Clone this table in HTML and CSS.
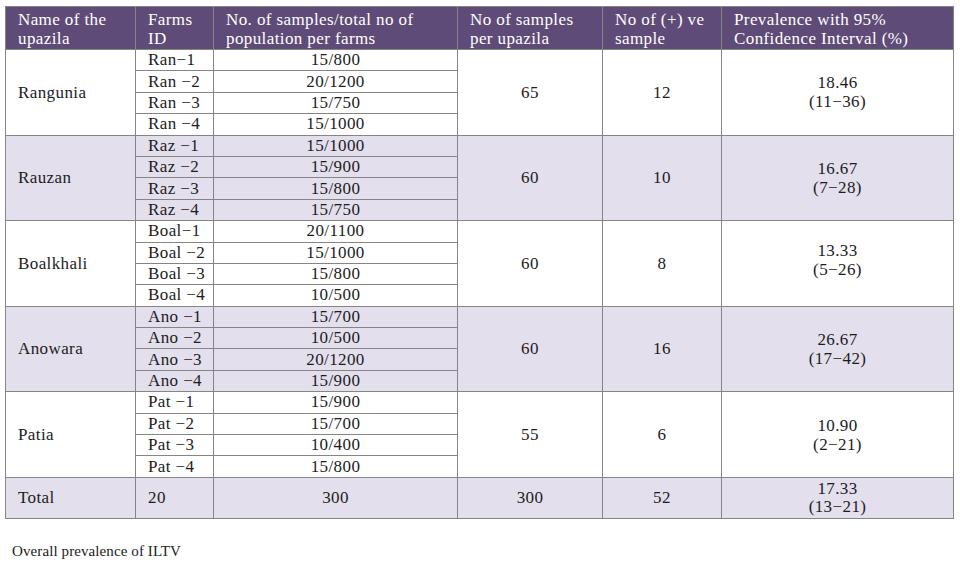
FILE: index.html
```html
<!DOCTYPE html>
<html>
<head>
<meta charset="utf-8">
<link rel="stylesheet" href="styles.css">
</head>
<body>
<div class="page">
<table class="data">
<colgroup>
<col class="c1"><col class="c2"><col class="c3"><col class="c4"><col class="c5"><col class="c6">
</colgroup>
<thead>
<tr>
<th>Name of the<br>upazila</th>
<th>Farms<br>ID</th>
<th>No. of samples/total no of<br>population per farms</th>
<th>No of samples<br>per upazila</th>
<th>No of (+) ve<br>sample</th>
<th>Prevalence with 95%<br>Confidence Interval (%)</th>
</tr>
</thead>
<tbody>
<tr class="sub"><td rowspan="4" class="name">Rangunia</td><td class="id">Ran−1</td><td class="ctr">15/800</td><td rowspan="4" class="ctr">65</td><td rowspan="4" class="ctr">12</td><td rowspan="4" class="ctr">18.46<br>(11−36)</td></tr>
<tr class="sub"><td class="id">Ran −2</td><td class="ctr">20/1200</td></tr>
<tr class="sub"><td class="id">Ran −3</td><td class="ctr">15/750</td></tr>
<tr class="sub"><td class="id">Ran −4</td><td class="ctr">15/1000</td></tr>
</tbody>
<tbody class="alt">
<tr class="sub"><td rowspan="4" class="name">Rauzan</td><td class="id">Raz −1</td><td class="ctr">15/1000</td><td rowspan="4" class="ctr">60</td><td rowspan="4" class="ctr">10</td><td rowspan="4" class="ctr">16.67<br>(7−28)</td></tr>
<tr class="sub"><td class="id">Raz −2</td><td class="ctr">15/900</td></tr>
<tr class="sub"><td class="id">Raz −3</td><td class="ctr">15/800</td></tr>
<tr class="sub"><td class="id">Raz −4</td><td class="ctr">15/750</td></tr>
</tbody>
<tbody>
<tr class="sub"><td rowspan="4" class="name">Boalkhali</td><td class="id">Boal−1</td><td class="ctr">20/1100</td><td rowspan="4" class="ctr">60</td><td rowspan="4" class="ctr">8</td><td rowspan="4" class="ctr up">13.33<br>(5−26)</td></tr>
<tr class="sub"><td class="id">Boal −2</td><td class="ctr">15/1000</td></tr>
<tr class="sub"><td class="id">Boal −3</td><td class="ctr">15/800</td></tr>
<tr class="sub"><td class="id">Boal −4</td><td class="ctr">10/500</td></tr>
</tbody>
<tbody class="alt">
<tr class="sub"><td rowspan="4" class="name">Anowara</td><td class="id">Ano −1</td><td class="ctr">15/700</td><td rowspan="4" class="ctr">60</td><td rowspan="4" class="ctr">16</td><td rowspan="4" class="ctr">26.67<br>(17−42)</td></tr>
<tr class="sub"><td class="id">Ano −2</td><td class="ctr">10/500</td></tr>
<tr class="sub"><td class="id">Ano −3</td><td class="ctr">20/1200</td></tr>
<tr class="sub"><td class="id">Ano −4</td><td class="ctr">15/900</td></tr>
</tbody>
<tbody>
<tr class="sub"><td rowspan="4" class="name">Patia</td><td class="id">Pat −1</td><td class="ctr">15/900</td><td rowspan="4" class="ctr">55</td><td rowspan="4" class="ctr">6</td><td rowspan="4" class="ctr">10.90<br>(2−21)</td></tr>
<tr class="sub"><td class="id">Pat −2</td><td class="ctr">15/700</td></tr>
<tr class="sub"><td class="id">Pat −3</td><td class="ctr">10/400</td></tr>
<tr class="sub"><td class="id">Pat −4</td><td class="ctr">15/800</td></tr>
</tbody>
<tbody class="alt">
<tr class="total"><td class="name">Total</td><td class="id">20</td><td class="ctr">300</td><td class="ctr">300</td><td class="ctr">52</td><td class="ctr tight">17.33<br>(13−21)</td></tr>
</tbody>
</table>
<p class="note">Overall prevalence of ILTV</p>
</div>
</body>
</html>
```
FILE: styles.css
```css
html, body {
  margin: 0;
  padding: 0;
  background: #ffffff;
}
.page {
  padding: 6px 0 0 5px;
  font-family: "Liberation Serif", "Times New Roman", serif;
  color: #1c1c1c;
}
.data {
  border-collapse: collapse;
  width: 948px;
  table-layout: fixed;
  font-size: 17px;
  letter-spacing: 0.4px;
}
.c1 { width: 130px; }
.c2 { width: 78px; }
.c3 { width: 244px; }
.c4 { width: 145px; }
.c5 { width: 119px; }
.c6 { width: 232px; }
.data th, .data td {
  border: 1px solid #858585;
  padding: 0 12px;
  vertical-align: middle;
  white-space: nowrap;
}
.data th {
  background: #5f4b78;
  color: #ffffff;
  font-weight: normal;
  text-align: left;
  line-height: 19px;
  height: 41px;
  padding-top: 1px;
  padding-bottom: 0;
}
.data .sub td {
  height: 20.4px;
  line-height: 18px;
  padding-top: 0;
  padding-bottom: 0;
}
.data .sub td[rowspan] {
  line-height: 19px;
}
.alt td {
  background: #e4dfec;
}
.name {
  text-align: left;
}
.id {
  text-align: left;
}
.ctr {
  text-align: center;
}
.up {
  padding-bottom: 6px !important;
}
.data .total td {
  height: 40px;
  line-height: 19px;
}
.data .total .tight {
  line-height: 18px;
  padding-top: 0;
  padding-bottom: 0;
}
.note {
  margin: 24px 0 0 7px;
  font-size: 15px;
  letter-spacing: 0.1px;
}
```
